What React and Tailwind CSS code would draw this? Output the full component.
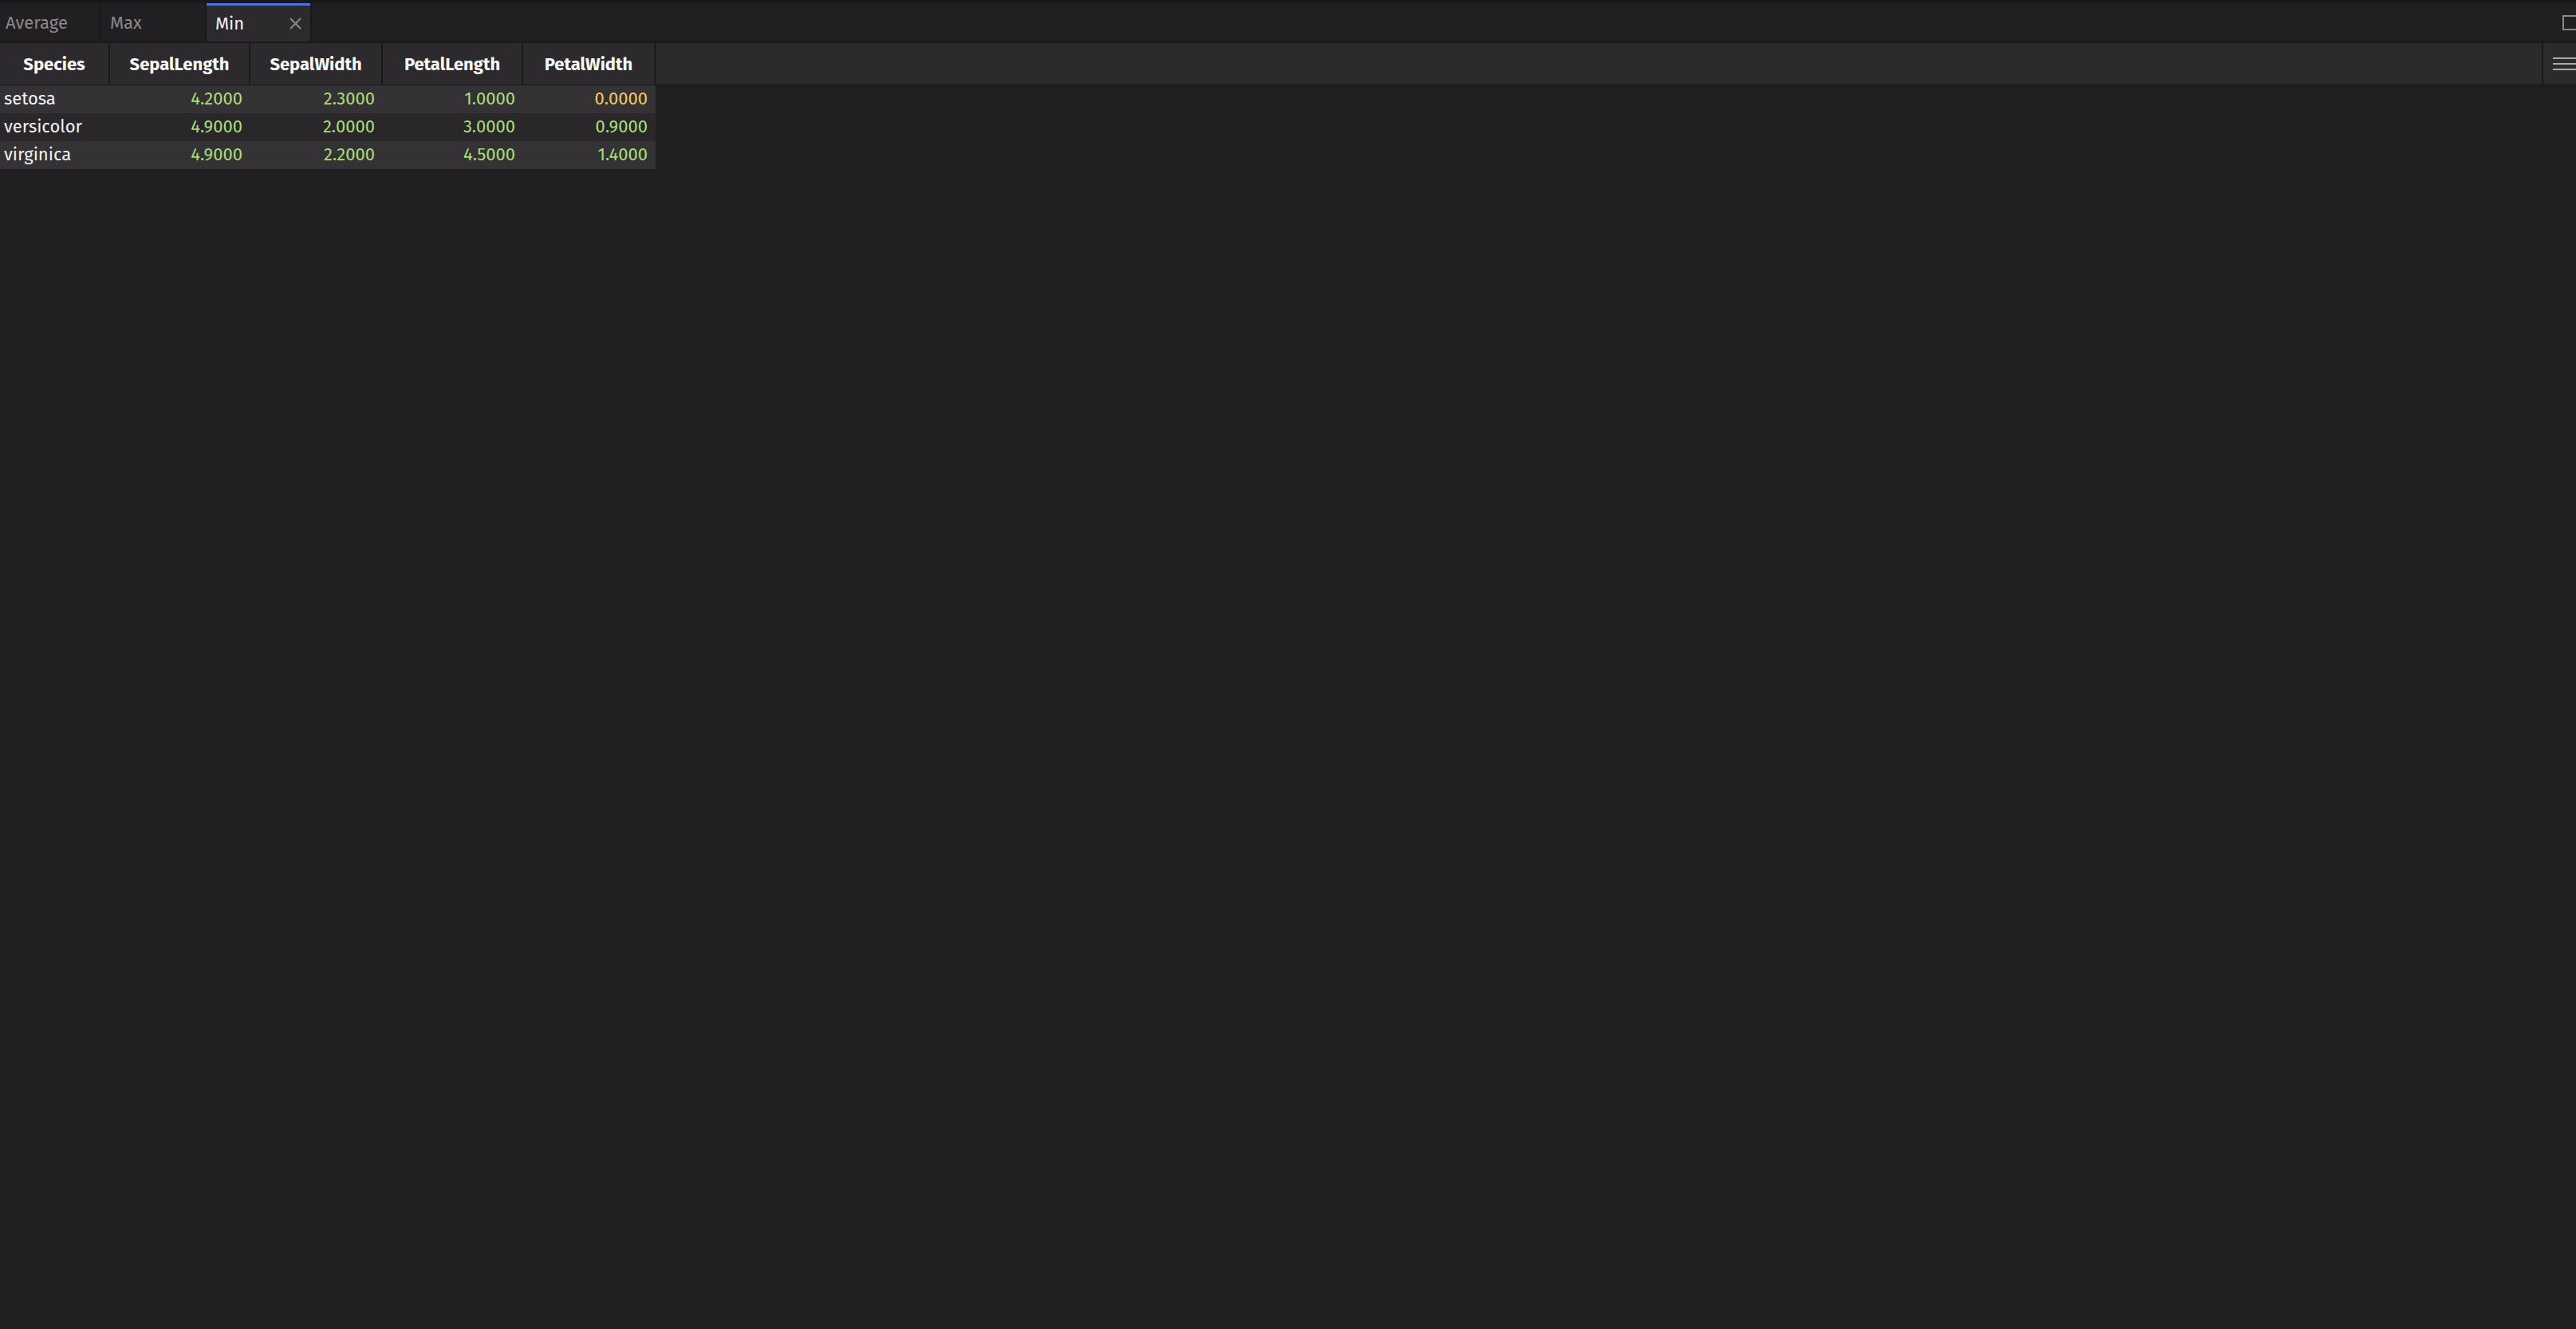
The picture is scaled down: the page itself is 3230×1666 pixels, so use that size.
import React from "react";

const columns = ["Species", "SepalLength", "SepalWidth", "PetalLength", "PetalWidth"];
const widths = ["w-[138px]", "w-[176px]", "w-[166px]", "w-[176px]", "w-[166px]"];

const rows = [
  { species: "setosa", values: ["4.2000", "2.3000", "1.0000", "0.0000"] },
  { species: "versicolor", values: ["4.9000", "2.0000", "3.0000", "0.9000"] },
  { species: "virginica", values: ["4.9000", "2.2000", "4.5000", "1.4000"] },
];

const tabs = [
  { name: "Average", width: "w-[125px]", pad: "pl-[7px]" },
  { name: "Max", width: "w-[130px]", pad: "pl-[11px]" },
  { name: "Min", width: "w-[130px]", pad: "pl-[11px]" },
];

const App = () => {
  return (
    <div className="flex flex-col w-full h-[1666px] bg-[#211f22] text-white overflow-hidden font-['Fira_Sans','Noto_Sans',sans-serif]">
      {/* tab strip */}
      <div className="flex h-[54px] bg-[#19181a] pt-[4px] border-b-2 border-[#19181a]">
        {tabs.map((tab) => {
          const active = tab.name === "Min";
          return (
            <div
              key={tab.name}
              className={`flex items-center ${tab.width} ${tab.pad} mr-[2px] text-[22px] ${
                active
                  ? "bg-[#2d2a2e] border-t-[3px] border-[#4f74d9] text-[#f2f2f2] pr-[10px] justify-between"
                  : "bg-[#221f22] text-[#8a888b]"
              }`}
            >
              <span>{tab.name}</span>
              {active && (
                <svg width="15" height="15" viewBox="0 0 15 15" className="mr-[1px]">
                  <path d="M1 1 L14 14 M14 1 L1 14" stroke="#8a888b" strokeWidth="2" />
                </svg>
              )}
            </div>
          );
        })}
        <div className="flex-1 bg-[#221f22] flex items-center justify-end">
          <div className="w-[19px] h-[19px] border-2 border-[#8a888b] -mr-[2px]"></div>
        </div>
      </div>

      {/* header */}
      <div className="flex h-[54px] bg-[#2d2a2e] border-b-2 border-[#19181a]">
        {columns.map((col, i) => (
          <div
            key={col}
            className={`${widths[i]} flex items-center justify-center border-r-2 border-[#19181a] text-[22px] font-bold text-[#f8f8f8]`}
          >
            {col}
          </div>
        ))}
        <div className="flex-1"></div>
        <div className="w-[43px] border-l-2 border-[#19181a] flex flex-col justify-center items-end gap-[5px]">
          <div className="w-[29px] h-[2px] bg-[#a9a8aa]"></div>
          <div className="w-[29px] h-[2px] bg-[#a9a8aa]"></div>
          <div className="w-[29px] h-[2px] bg-[#a9a8aa]"></div>
        </div>
      </div>

      {/* rows */}
      <div className="flex flex-col w-[822px] -mt-[1px]">
        {rows.map((row, r) => (
          <div
            key={row.species}
            className={`flex h-[35px] items-center pb-[2px] text-[22px] leading-none ${r % 2 === 0 ? "bg-[#353236]" : "bg-[#2a272b]"}`}
          >
            <div className={`${widths[0]} pl-[5px] text-[#f2f2f2]`}>{row.species}</div>
            {row.values.map((v, i) => (
              <div
                key={i}
                className={`${widths[i + 1]} text-right pr-[10px] ${v === "0.0000" ? "text-[#f2c75c]" : "text-[#a9dc76]"}`}
              >
                {v}
              </div>
            ))}
          </div>
        ))}
      </div>
    </div>
  );
};

export default App;
